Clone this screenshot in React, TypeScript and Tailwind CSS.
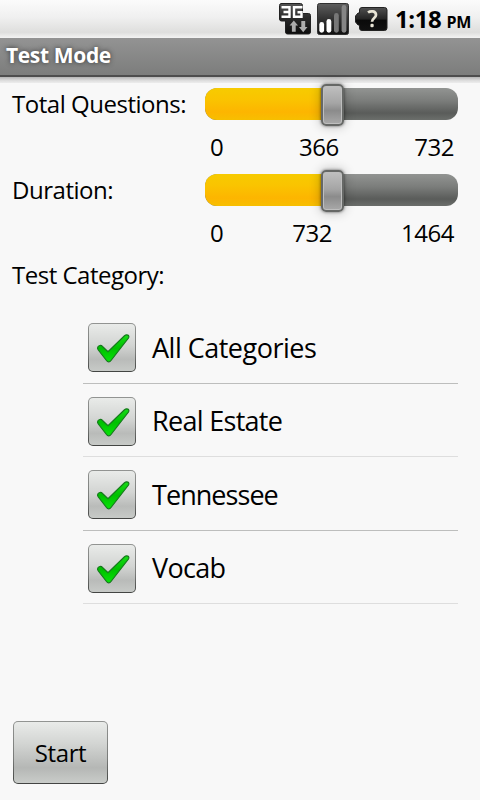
import React from "react";

function NetworkIcon() {
  return (
    <svg width="34" height="34" viewBox="0 0 34 34" className="shrink-0">
      <defs>
        <linearGradient id="net" x1="0" y1="0" x2="0" y2="1">
          <stop offset="0" stopColor="#555" />
          <stop offset="0.45" stopColor="#2c2c2c" />
          <stop offset="1" stopColor="#0c0c0c" />
        </linearGradient>
      </defs>
      <path d="M3 1.500H22.500a2 2 0 0 1 2 2V11.500H30.500a2 2 0 0 1 2 2V30a2 2 0 0 1-2 2H9.500a2 2 0 0 1-2-2V19H3.500a2 2 0 0 1-2-2V3.500a2 2 0 0 1 2-2Z" fill="url(#net)" stroke="#222" />
      <path d="M3.500 5.200H11.500V14.800H3.500M5.500 10H11.500M24.500 5.200H16V14.800H23.500V10.300H19.500" fill="none" stroke="#fff" strokeWidth="2.400" />
      <path d="M15.800 18.500L20 23.500H17.700V29.700H13.900V23.500H11.600Z" fill="#adadad" />
      <path d="M25.200 30.200L29.500 25H27.200V19H23.300V25H21Z" fill="#adadad" />
    </svg>
  );
}

function SignalIcon() {
  return (
    <svg width="33" height="33" viewBox="0 0 33 33" className="shrink-0">
      <defs>
        <linearGradient id="sig" x1="0" y1="0" x2="0" y2="1">
          <stop offset="0" stopColor="#5e5e5e" />
          <stop offset="0.5" stopColor="#323232" />
          <stop offset="1" stopColor="#101010" />
        </linearGradient>
      </defs>
      <rect x="0.500" y="0.500" width="31" height="31" rx="2" fill="url(#sig)" stroke="#303030" />
      <g strokeWidth="4.800" strokeLinecap="round">
        <path d="M4.700 21.500V27.300" stroke="#fff" />
        <path d="M11.900 18.500V27.300" stroke="#fff" />
        <path d="M19.400 12.500V27.300" stroke="#777" />
        <path d="M27 4.500V27.300" stroke="#858585" />
      </g>
    </svg>
  );
}

function BatteryIcon() {
  return (
    <svg width="33" height="25" viewBox="0 0 33 25" className="shrink-0">
      <defs>
        <linearGradient id="bat" x1="0" y1="0" x2="0" y2="1">
          <stop offset="0" stopColor="#505050" />
          <stop offset="0.500" stopColor="#242424" />
          <stop offset="0.550" stopColor="#0a0a0a" />
          <stop offset="1" stopColor="#111" />
        </linearGradient>
      </defs>
      <path d="M7 0.500H29.500a2.500 2.500 0 0 1 2.500 2.500V21a2.500 2.500 0 0 1-2.500 2.500H7a2.500 2.500 0 0 1-2.500-2.500V18H3L0.500 15V9L3 6H4.500V3a2.500 2.500 0 0 1 2.500-2.500Z" fill="url(#bat)" stroke="#222" />
      <path d="M13 5.500C15.500 3.600 21 3.700 21 8C21 11 17 11 17 14.800" fill="none" stroke="#e9e5d6" strokeWidth="2.700" />
      <rect x="15.400" y="16.800" width="3.300" height="3.500" rx="1.300" fill="#e9e5d6" />
    </svg>
  );
}

function Slider() {
  return (
    <div className="relative h-8 w-[253px]">
      <div className="h-8 rounded-[12px] bg-[linear-gradient(180deg,#929492_0%,#7b7d7b_40%,#5a5c5a_78%,#6b6e6b_100%)]">
        <div className="h-8 w-[127px] rounded-l-[12px] bg-[linear-gradient(180deg,#f7cb00_0%,#fac400_35%,#fdb500_75%,#f7bf00_100%)]" />
      </div>
      <div className="absolute -top-[4px] left-[116px] h-[42px] w-[23px] rounded-[5px] border-2 border-[#666866] bg-[linear-gradient(180deg,#c0c0c0_0%,#a5a5a5_45%,#8b8b8b_65%,#a9a9a9_100%)] shadow-[0_0_3px_0_rgba(0,0,0,0.55),0_0_11px_1px_rgba(0,0,0,0.22),inset_0_0_0_1px_#bebebe]" />
    </div>
  );
}

function SliderRow({ label, values }: { label: string; values: string[] }) {
  return (
    <div className="flex h-[86px]">
      <div className="-mt-px w-[193px] text-[24px] leading-[33px] tracking-[-0.47px] whitespace-nowrap">{label}</div>
      <div className="w-[253px]">
        <Slider />
        <div className="flex justify-between pt-[10px] pr-[4px] pl-[5px] text-[24px] leading-[33px] tracking-[-0.5px]">
          {values.map((v) => (
            <span key={v}>{v}</span>
          ))}
        </div>
      </div>
    </div>
  );
}

function CheckMark() {
  return (
    <svg width="48" height="49" viewBox="0 0 48 49">
      <defs>
        <linearGradient id="chk" x1="0" y1="0" x2="0" y2="1">
          <stop offset="0" stopColor="#16dc16" />
          <stop offset="0.500" stopColor="#00c000" />
          <stop offset="1" stopColor="#08e408" />
        </linearGradient>
      </defs>
      <path d="M9.700 23.300C10.500 21.300 13 20.800 14.500 22.500L20 27.700L36.500 11.700C38.500 10 42 11 40.500 14L23 36.500C21.800 38.200 19.700 38.200 18.500 36.500L10.300 26C9.500 25 9.300 24.200 9.700 23.300Z" fill="url(#chk)" stroke="#167a1c" strokeWidth="1.200" />
    </svg>
  );
}

function CategoryRow({ label, row, text }: { label: string; row: string; text: string }) {
  return (
    <div className={"flex h-[73.5px] items-center border-b pt-[3px] pl-[5px] " + row}>
      <div className="h-[49px] w-[48px] rounded-[5px] bg-[linear-gradient(180deg,#929492,#787a78_60%,#424442)] p-px">
        <div className="h-[47px] w-[46px] rounded-[4px] bg-[linear-gradient(180deg,#e9ebe9_0%,#d3d5d3_45%,#b9bbb9_75%,#c7cac7_100%)]">
          <div className="-ml-px">
            <CheckMark />
          </div>
        </div>
      </div>
      <span className={"pl-4 text-[27px] leading-[36px] whitespace-nowrap " + text}>{label}</span>
    </div>
  );
}

export default function App() {
  return (
    <div className="flex h-[800px] w-[480px] flex-col overflow-hidden bg-[#f8f8f8] font-['Open_Sans','Noto_Sans',sans-serif] text-black">
      <header className="flex h-[38px] items-start bg-[linear-gradient(180deg,#fbfbfb_0%,#f0f0f0_45%,#dededd_85%,#f3f3f3_100%)] pt-[2px] pl-[278px]">
        <NetworkIcon />
        <div className="pt-px pl-[5px]"><SignalIcon /></div>
        <div className="pt-[5px] pl-[5px]"><BatteryIcon /></div>
        <div className="-mt-px flex items-baseline pl-[7px] font-bold whitespace-nowrap">
          <span className="text-[24px] leading-[36px] tracking-[-0.4px]">1:18</span>
          <span className="pl-[5px] text-[16px] tracking-[-0.2px]">PM</span>
        </div>
      </header>
      <div className="h-[39px] border-b-2 border-[#4d4d4d] bg-[linear-gradient(180deg,#939393,#7c7d7c)] pl-[6px]">
        <h1 className="text-[21px] leading-[35px] font-bold tracking-[-0.35px] text-white [text-shadow:0_0_5px_#333]">Test Mode</h1>
      </div>
      <div className="h-[6px] bg-[linear-gradient(180deg,#b5b5b5,#dedede_60%,#ededed)]" />
      <main className="flex grow flex-col pt-[5px] pl-3">
        <SliderRow label="Total Questions:" values={["0", "366", "732"]} />
        <SliderRow label="Duration:" values={["0", "732", "1464"]} />
        <div className="-mt-[2px] h-[52px] text-[24px] leading-[33px] tracking-[-0.5px]">Test Category:</div>
        <div className="ml-[71px] w-[375px]">
          <CategoryRow label="All Categories" row="border-[#bdbebd]" text="tracking-[-0.5px]" />
          <CategoryRow label="Real Estate" row="border-[#dedede]" text="tracking-[-0.7px]" />
          <CategoryRow label="Tennessee" row="border-[#bdbebd]" text="tracking-[-0.95px]" />
          <CategoryRow label="Vocab" row="border-[#dedede]" text="tracking-[-0.7px]" />
        </div>
        <div className="mt-auto mb-[16px] ml-px h-[63px] w-[95px] rounded-[5px] bg-[linear-gradient(180deg,#929492,#787a78_60%,#424442)] p-px">
          <button className="h-[61px] w-[93px] rounded-[4px] bg-[linear-gradient(180deg,#e9ebe9_0%,#d3d5d3_35%,#b5b7b5_75%,#c9ccc9_100%)] pt-px text-[24px] tracking-[-0.4px]">Start</button>
        </div>
      </main>
    </div>
  );
}
